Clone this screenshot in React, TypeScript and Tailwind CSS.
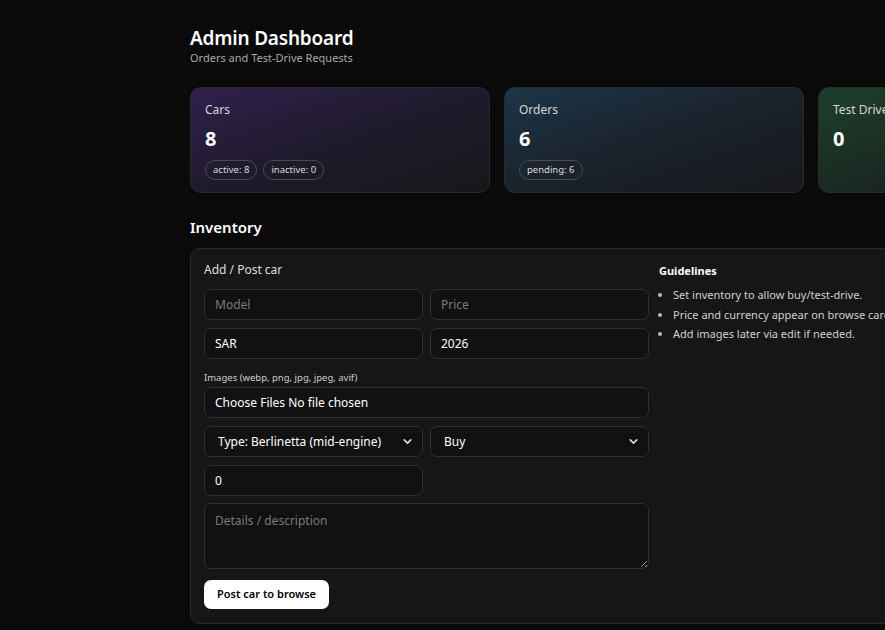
import { ChevronDown } from "lucide-react";

const stats = [
  {
    label: "Cars",
    value: "8",
    badges: ["active: 8", "inactive: 0"],
    tone: "from-[#30204d] via-[#1f1a2c] to-[#17171a]",
  },
  {
    label: "Orders",
    value: "6",
    badges: ["pending: 6"],
    tone: "from-[#1b3648] via-[#1a222c] to-[#17181b]",
  },
  {
    label: "Test Drives",
    value: "0",
    badges: [],
    tone: "from-[#1d3f2d] via-[#1a2a22] to-[#17191a]",
  },
];

const guidelines = [
  "Set inventory to allow buy/test-drive.",
  "Price and currency appear on browse cards.",
  "Add images later via edit if needed.",
];

function StatCard({ label, value, badges, tone }: (typeof stats)[number]) {
  return (
    <div className={`h-[106px] rounded-[11px] border border-[#2a2a2e] bg-gradient-to-br ${tone} px-[14px] pt-[14px]`}>
      <p className="text-[12px] leading-4 text-[#d6d6d6]">{label}</p>
      <p className="mt-[7px] text-[20px] font-bold leading-7 text-white">{value}</p>
      <div className="mt-[7px] flex gap-[6px]">
        {badges.map((b) => (
          <span
            key={b}
            className="flex h-[20px] items-center rounded-full border border-[#4a4a50] px-[7px] text-[9.5px] text-[#dcdcdc]"
          >
            {b}
          </span>
        ))}
      </div>
    </div>
  );
}

const field =
  "h-[31px] w-full rounded-[7px] border border-[#303030] bg-[#111111] px-[10px] text-[12px] text-white outline-none placeholder:text-[#7a7a7a]";

function Select({ value }: { value: string }) {
  return (
    <div className={`${field} flex items-center justify-between pl-[13px] pr-[8px]`}>
      <span>{value}</span>
      <ChevronDown size={13} strokeWidth={3} className="text-[#dcdcdc]" />
    </div>
  );
}

export default function App() {
  return (
    <div
      className="min-h-screen w-full overflow-hidden bg-[#0a0a0a] text-white"
      style={{ fontFamily: '"Noto Sans", "Open Sans", sans-serif' }}
    >
      <div className="w-[1100px] pl-[190px] pt-[25px]">
        <h1 className="text-[19px] font-semibold leading-[26px] tracking-[-0.2px]">Admin Dashboard</h1>
        <p className="text-[11px] leading-[14px] text-[#a8a8a8]">Orders and Test-Drive Requests</p>

        <div className="mt-[22px] grid grid-cols-[300px_300px_300px] gap-[14px]">
          {stats.map((s) => (
            <StatCard key={s.label} {...s} />
          ))}
        </div>

        <h2 className="mt-[24px] text-[15px] font-semibold leading-5">Inventory</h2>

        <div className="mt-[11px] flex gap-[10px] rounded-[10px] border border-[#2a2a2a] bg-[#161616] px-[13px] pb-[14px] pt-[13px]">
          <div className="w-[445px]">
            <p className="text-[12px] leading-4 text-[#dedede]">Add / Post car</p>

            <div className="mt-[11px] grid grid-cols-2 gap-x-[7px] gap-y-[8px]">
              <input className={field} placeholder="Model" />
              <input className={field} placeholder="Price" />
              <input className={field} defaultValue="SAR" />
              <input className={field} defaultValue="2026" />
            </div>

            <p className="mt-[12px] text-[9.5px] leading-[14px] text-[#cfcfcf]">Images (webp, png, jpg, jpeg, avif)</p>
            <div className={`${field} mt-[2px] flex items-center`}>Choose Files No file chosen</div>

            <div className="mt-[8px] grid grid-cols-2 gap-x-[7px] gap-y-[8px]">
              <Select value="Type: Berlinetta (mid-engine)" />
              <Select value="Buy" />
              <input className={field} defaultValue="0" />
            </div>

            <textarea
              className="mt-[7px] block h-[66px] w-full rounded-[7px] border border-[#303030] bg-[#111111] px-[10px] py-[8px] text-[12px] text-white outline-none placeholder:text-[#7a7a7a]"
              placeholder="Details / description"
            />

            <button className="mt-[11px] h-[29px] rounded-[7px] bg-white px-[13px] text-[11px] font-semibold text-black">
              Post car to browse
            </button>
          </div>

          <div className="pt-[1px]">
            <p className="text-[11px] font-bold leading-4">Guidelines</p>
            <ul className="mt-[6px] list-disc pl-[14px] text-[11px] leading-[19.5px] text-[#cfcfcf] marker:text-[#bbbbbb]">
              {guidelines.map((g) => (
                <li key={g} className="whitespace-nowrap">
                  {g}
                </li>
              ))}
            </ul>
          </div>
        </div>
      </div>
    </div>
  );
}
